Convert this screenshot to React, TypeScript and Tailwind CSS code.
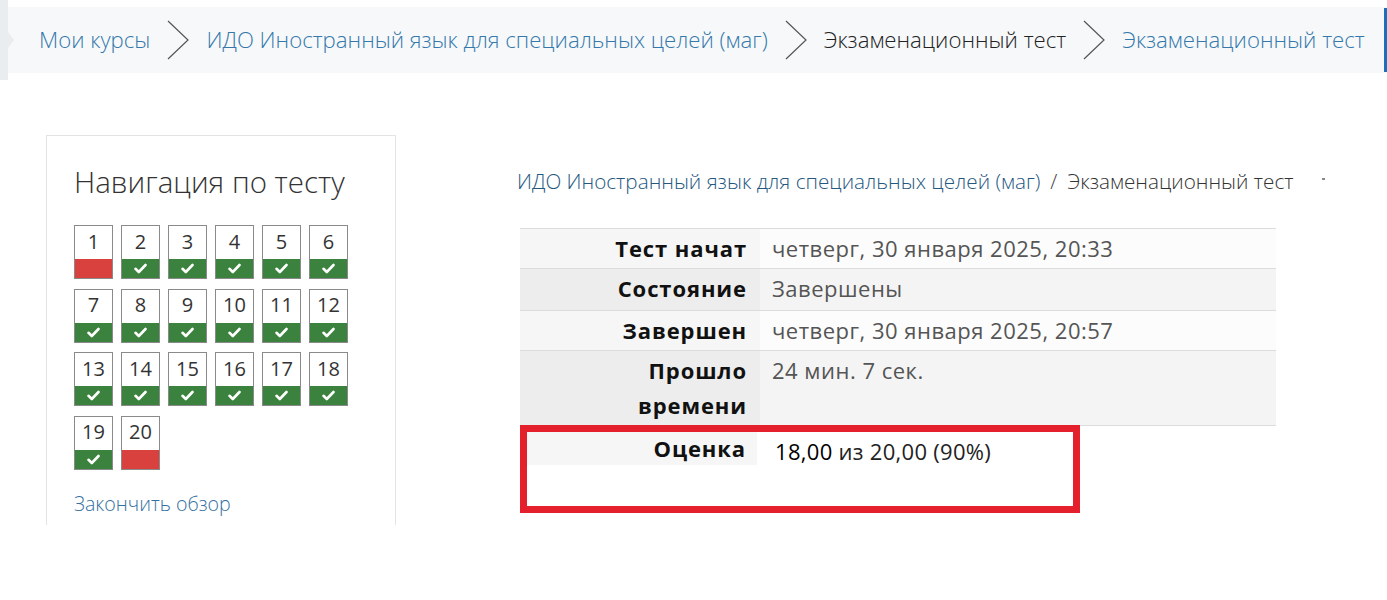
import React from "react";

const done = [2, 3, 4, 5, 6, 7, 8, 9, 10, 11, 12, 13, 14, 15, 16, 17, 18, 19];

function Chevron() {
  return (
    <svg width="26" height="42" viewBox="0 0 26 42" className="shrink-0">
      <polyline points="3,2 23,21 3,40" fill="none" stroke="#555" strokeWidth="1.2" />
    </svg>
  );
}

function Check() {
  return (
    <svg width="13" height="11" viewBox="0 0 13 11">
      <path d="M1.5 5.8 L4.8 9 L11.5 2" fill="none" stroke="#fff" strokeWidth="2.6" strokeLinecap="round" strokeLinejoin="round" />
    </svg>
  );
}

function QButton({ n }: { n: number }) {
  const ok = done.includes(n);
  return (
    <div className="w-[39px] h-[54px] border border-[#8a8a8a] flex flex-col bg-white">
      <div className="h-[33px] flex items-center justify-center pb-[2px] text-[20px] leading-none text-[#333]">{n}</div>
      <div className={`flex-1 flex items-center justify-center ${ok ? "bg-[#3a823d]" : "bg-[#d9413e]"}`}>
        {ok && <Check />}
      </div>
    </div>
  );
}

type Row = { label: React.ReactNode; value: string; h: string };

const rows: Row[] = [
  { label: "Тест начат", value: "четверг, 30 января 2025, 20:33", h: "h-[40px]" },
  { label: "Состояние", value: "Завершены", h: "h-[42px]" },
  { label: "Завершен", value: "четверг, 30 января 2025, 20:57", h: "h-[40px]" },
  {
    label: (
      <>
        Прошло
        <br />
        времени
      </>
    ),
    value: "24 мин. 7 сек.",
    h: "h-[75px]",
  },
];

export default function App() {
  return (
    <div className="w-[1387px] h-[600px] bg-white overflow-hidden" style={{ fontFamily: '"Open Sans", "Noto Sans", sans-serif' }}>
      {/* top breadcrumb */}
      <div className="flex h-[80px]">
        <div className="w-[8px] h-[80px] bg-[#e9edf0] relative shrink-0">
          <div className="absolute left-[8px] top-[32px] w-0 h-0 border-y-[8px] border-y-transparent border-l-[6px] border-l-[#e9edf0]" />
        </div>
        <div className="mt-[7px] h-[66px] flex-1 bg-[#f6f8fa] flex items-center pl-[31px] text-[22.2px] font-light whitespace-nowrap overflow-hidden">
          <span className="text-[#3578ab]">Мои курсы</span>
          <span className="mx-[15px]"><Chevron /></span>
          <span className="text-[#3578ab]">ИДО Иностранный язык для специальных целей (маг)</span>
          <span className="mx-[15px]"><Chevron /></span>
          <span className="text-[#222]">Экзаменационный тест</span>
          <span className="mx-[15px]"><Chevron /></span>
          <span className="text-[#3578ab]">Экзаменационный тест</span>
          <div className="ml-auto w-[3px] h-[64px] bg-[#1e6fb8] shrink-0" />
        </div>
      </div>

      <div className="flex mt-[55px]">
        {/* left nav */}
        <div className="ml-[46px] w-[350px] h-[390px] border-x border-t border-[#e4e4e4] pl-[27px] pt-[25px] shrink-0">
          <div className="text-[29.5px] font-light text-[#333] leading-[42px] whitespace-nowrap">Навигация по тесту</div>
          <div className="mt-[22px] grid grid-cols-[repeat(6,39px)] gap-x-[8px] gap-y-[9.5px]">
            {Array.from({ length: 20 }, (_, i) => (
              <QButton key={i} n={i + 1} />
            ))}
          </div>
          <div className="mt-[19px] text-[19.6px] font-light text-[#3470a0]">Закончить обзор</div>
        </div>

        {/* right content */}
        <div className="ml-[121px] w-[820px] shrink-0">
          <div className="mt-[31px] text-[20.7px] font-light flex items-center whitespace-nowrap">
            <span className="text-[#25587f]">ИДО Иностранный язык для специальных целей (маг)</span>
            <span className="mx-[10px] text-[#444]">/</span>
            <span className="text-[#333]">Экзаменационный тест</span>
            <span className="ml-[28px] w-[3px] h-[2px] bg-[#888] mb-[6px]" />
          </div>

          <div className="mt-[31px] ml-[3px] w-[756px]">
            {rows.map((r, i) => (
              <div key={i} className={`flex border-t border-[#dcdcdc] ${r.h} ${i % 2 ? "bg-[#f4f4f4]" : "bg-[#fcfcfc]"}`}>
                <div className={`w-[240px] shrink-0 text-right pr-[13px] text-[22px] tracking-[0.9px] font-bold text-[#111] leading-[35px] pt-[2px] ${i % 2 ? "bg-[#ededed]" : "bg-[#f6f6f6]"}`}>
                  {r.label}
                </div>
                <div className="pl-[12px] text-[22px] tracking-[0.5px] text-[#555] leading-[35px] pt-[2px] whitespace-nowrap">{r.value}</div>
              </div>
            ))}
            <div className="border-t border-[#dcdcdc]" />
            <div className="w-[560px] h-[88px] -mt-[1px] border-[7px] border-[#e3202b] bg-white flex items-start">
              <div className="w-[230px] shrink-0 h-[33px] bg-[#f6f6f6] text-right pr-[11px] text-[22px] tracking-[0.9px] font-bold text-[#111] leading-[33px]">
                Оценка
              </div>
              <div className="pl-[18px] text-[22px] tracking-[0.3px] text-[#222] leading-[33px] pt-[3px] whitespace-nowrap">
                <span className="text-[#000]">18,00</span> из 20,00 (90%)
              </div>
            </div>
          </div>
        </div>
      </div>
    </div>
  );
}
